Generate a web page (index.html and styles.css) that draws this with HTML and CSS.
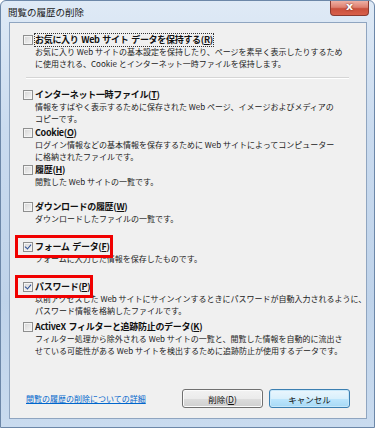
FILE: index.html
```html
<!DOCTYPE html>
<html lang="ja">
<head>
    <meta charset="UTF-8">
    <meta name="viewport" content="width=device-width, initial-scale=1.0">
    <title>閲覧の履歴の削除</title>
    <link rel="stylesheet" href="styles.css">
</head>
<body>
    <div class="frame">
        <!-- タイトルバー -->
        <div class="titlebar">
            <span class="title">閲覧の履歴の削除</span>
            <span class="close">x</span>
        </div>

        <div class="client">
            <div class="opts">
                <div class="opt">
                    <div class="opt-head focus"><span class="cb"></span><span class="label">お気に入り Web サイト データを保持する(<u>R</u>)</span></div>
                    <p class="desc">お気に入り Web サイトの基本設定を保持したり、ページを素早く表示したりするため<br>に使用される、Cookie とインターネット一時ファイルを保持します。</p>
                </div>
                <div class="sep"></div>
                <div class="opt">
                    <div class="opt-head"><span class="cb"></span><span class="label">インターネット一時ファイル(<u>T</u>)</span></div>
                    <p class="desc">情報をすばやく表示するために保存された Web ページ、イメージおよびメディアの<br>コピーです。</p>
                </div>
                <div class="opt opt-tight">
                    <div class="opt-head"><span class="cb"></span><span class="label">Cookie(<u>O</u>)</span></div>
                    <p class="desc">ログイン情報などの基本情報を保存するために Web サイトによってコンピューター<br>に格納されたファイルです。</p>
                </div>
                <div class="opt opt-tight">
                    <div class="opt-head"><span class="cb"></span><span class="label">履歴(<u>H</u>)</span></div>
                    <p class="desc">閲覧した Web サイトの一覧です。</p>
                </div>
                <div class="opt opt-loose">
                    <div class="opt-head"><span class="cb"></span><span class="label">ダウンロードの履歴(<u>W</u>)</span></div>
                    <p class="desc">ダウンロードしたファイルの一覧です。</p>
                </div>
                <div class="opt opt-loose">
                    <div class="opt-head mark"><span class="cb checked"></span><span class="label">フォーム データ(<u>F</u>)</span></div>
                    <p class="desc">フォームに入力した情報を保存したものです。</p>
                </div>
                <div class="opt opt-loose">
                    <div class="opt-head mark"><span class="cb checked"></span><span class="label">パスワード(<u>P</u>)</span></div>
                    <p class="desc">以前アクセスした Web サイトにサインインするときにパスワードが自動入力されるように、<br>パスワード情報を格納したファイルです。</p>
                </div>
                <div class="opt">
                    <div class="opt-head"><span class="cb"></span><span class="label">ActiveX フィルターと追跡防止のデータ(<u>K</u>)</span></div>
                    <p class="desc">フィルター処理から除外される Web サイトの一覧と、閲覧した情報を自動的に流出さ<br>せている可能性がある Web サイトを検出するために追跡防止が使用するデータです。</p>
                </div>
            </div>

            <div class="footer">
                <a class="help" href="#">閲覧の履歴の削除についての詳細</a>
                <div class="btns">
                    <button class="btn">削除(<u>D</u>)</button>
                    <button class="btn btn-default">キャンセル</button>
                </div>
            </div>
        </div>
    </div>
</body>
</html>
```

FILE: styles.css
```css
body {
    margin: 0;
    width: 375px;
    height: 428px;
    overflow: hidden;
    font-family: "Noto Sans CJK JP", "Liberation Sans", sans-serif;
    background: #fff;
}

/* ウィンドウ枠 */
.frame {
    width: 375px;
    height: 428px;
    box-sizing: border-box;
    padding: 0 7px 8px 8px;
    background: linear-gradient(to bottom, #dfeaf6 0%, #cadbef 30%, #bfd3ea 70%, #c9dbef 100%);
    border: 1px solid #6c87a8;
    border-radius: 6px 6px 0 0;
    display: flex;
    flex-direction: column;
}
.titlebar {
    height: 21px;
    display: flex;
    align-items: flex-start;
    justify-content: space-between;
}
.title {
    font-size: 9.5px;
    line-height: 22px;
    color: #1a1a1a;
    margin-left: -1px;
}
.close {
    width: 37px;
    height: 14px;
    margin-right: -2px;
    border: 1px solid #8a3a30;
    border-top: none;
    border-radius: 0 0 4px 4px;
    background: linear-gradient(to bottom, #eeb0a4 0%, #de8070 45%, #c9503c 55%, #d8604a 100%);
    color: #fff;
    font-family: "DejaVu Sans", sans-serif;
    font-weight: bold;
    font-size: 11px;
    line-height: 12px;
    text-align: center;
    text-shadow: 0 0 2px #5a1a10;
}

/* クライアント領域 */
.client {
    flex: 1;
    background: #f0f0f0;
    border: 1px solid #8fa5c0;
    display: flex;
    flex-direction: column;
    padding: 11px 16px 10px 13px;
}
.opts {
    display: flex;
    flex-direction: column;
}
.opt {
    height: 38px;
    display: flex;
    flex-direction: column;
    align-items: flex-start;
}
.opt-tight {
    height: 37px;
}
.opt-loose {
    height: 40px;
}
.opt-head {
    display: flex;
    align-items: center;
    height: 12px;
    position: relative;
}
.cb {
    width: 8px;
    height: 8px;
    border: 1px solid #8e8f8f;
    background: linear-gradient(135deg, #d4d4d4, #f6f6f6);
    box-shadow: inset 0 0 0 1px #f4f4f4;
    margin-right: 2px;
    position: relative;
}
.cb.checked::after {
    content: "";
    position: absolute;
    left: 2px;
    top: 0px;
    width: 3px;
    height: 5px;
    border: solid #2a4f94;
    border-width: 0 1.5px 1.5px 0;
    transform: rotate(40deg);
}
.label {
    font-size: 9px;
    line-height: 12px;
    font-weight: bold;
    color: #111;
    white-space: nowrap;
    letter-spacing: -0.3px;
    word-spacing: 1px;
}
.focus .label {
    outline: 1px dotted #333;
    outline-offset: 0;
}
/* 赤枠 */
.mark::before {
    content: "";
    position: absolute;
    left: -8px;
    top: -6px;
    right: -3px;
    bottom: -5px;
    border: 3px solid #f00000;
}
.desc {
    margin: 0 0 0 12px;
    font-size: 8px;
    line-height: 11.5px;
    color: #222;
    white-space: nowrap;
}
.sep {
    height: 0;
    border-top: 1px solid #d5d5d5;
    border-bottom: 1px solid #ffffff;
    margin: 5px 1px 10px 3px;
}

/* 下部 */
.footer {
    margin-top: auto;
    display: flex;
    align-items: center;
    justify-content: space-between;
    padding-left: 3px;
}
.help {
    font-size: 8px;
    color: #0066cc;
    text-decoration: underline;
}
.btns {
    display: flex;
    gap: 6px;
}
.btn {
    width: 81px;
    height: 19px;
    padding: 0;
    font-family: "Noto Sans CJK JP", sans-serif;
    font-size: 8.5px;
    color: #111;
    border: 1px solid #707070;
    border-radius: 3px;
    background: linear-gradient(to bottom, #f2f2f2 0%, #ebebeb 50%, #dddddd 51%, #cfcfcf 100%);
    box-shadow: inset 0 0 0 1px #fbfbfb;
}
.btn-default {
    border-color: #3c7fb1;
    background: linear-gradient(to bottom, #eaf6fd 0%, #d9f0fc 50%, #bee6fd 51%, #a7d9f5 100%);
    box-shadow: inset 0 0 0 1px #c8e8fa;
}
```
